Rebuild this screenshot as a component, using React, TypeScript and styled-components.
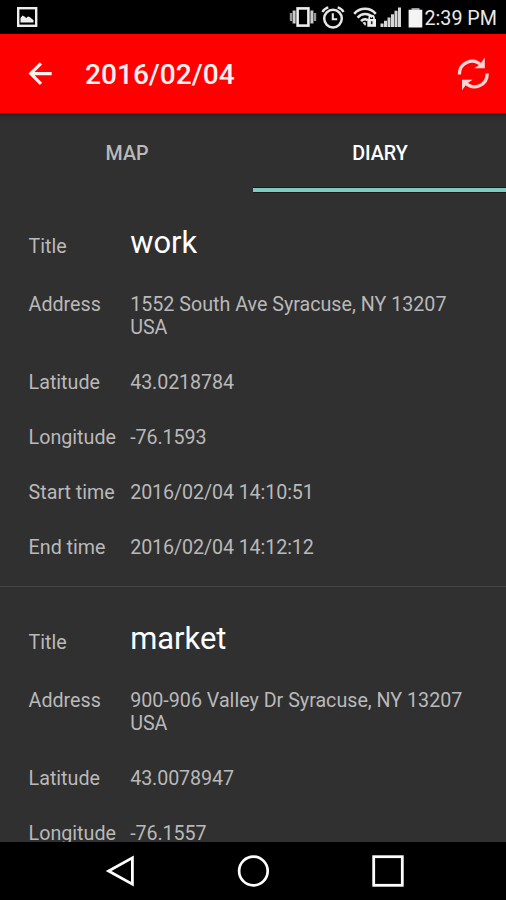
import React from "react";
import styled, { createGlobalStyle } from "styled-components";

const GlobalStyle = createGlobalStyle`
  body { margin: 0; background: #000; }
  * { box-sizing: border-box; }
`;

const Screen = styled.div`
  display: flex;
  flex-direction: column;
  width: 506px;
  height: 900px;
  overflow: hidden;
  background: #303030;
  color: #b9b9b9;
  font-family: Roboto, "Liberation Sans", sans-serif;
  font-size: 19.68px;
`;

const StatusBar = styled.header`
  display: flex;
  flex: none;
  align-items: center;
  height: 34px;
  padding: 0 8.5px 0 16px;
  background: #000;
`;

const StatusIcons = styled.div`
  display: flex;
  align-items: center;
  margin-left: auto;
`;

const Clock = styled.time`
  width: 73px;
  margin-left: 2px;
  padding-top: 4px;
  color: #e9e9e9;
  line-height: 32px;
  white-space: nowrap;
`;

const Icon = styled.svg<{ $gap?: number }>`
  display: block;
  flex: none;
  margin-left: ${(p) => p.$gap ?? 0}px;
`;

const AppBar = styled.div`
  display: flex;
  flex: none;
  align-items: center;
  height: 79px;
  padding: 0 16px 0 28px;
  background: #fe0000;
`;

const IconButton = styled.button`
  display: flex;
  padding: 0;
  border: 0;
  background: none;
  color: inherit;
`;

const AppTitle = styled.h1`
  flex: 1;
  margin: 3px 0 0 33px;
  color: #fff0f0;
  font-size: 28.1px;
  font-weight: 500;
  line-height: 36px;
`;

const Tabs = styled.nav`
  display: flex;
  flex: none;
  height: 79px;
  background: linear-gradient(#242424, #2d2d2d 5px, #303030 10px);
`;

const Tab = styled.button<{ $active?: boolean }>`
  flex: 1;
  padding: 6px 0 0 1px;
  border: 0;
  border-bottom: 4px solid ${(p) => (p.$active ? "#80cbc0" : "transparent")};
  background: none;
  box-shadow: ${(p) => (p.$active ? "inset 0 -1px #201818, 0 1px #201818" : "none")};
  color: ${(p) => (p.$active ? "#fff" : "#b9b9b9")};
  font: 500 19.68px/69px Roboto, sans-serif;
`;

const Diary = styled.main`
  flex: 1;
  min-height: 0;
  overflow: hidden;
`;

const Entry = styled.dl`
  display: flex;
  flex-direction: column;
  gap: 32px;
  height: 394px;
  margin: 0;
  padding: 33px 29px 0 28.6px;

  & + & {
    border-top: 1px solid #464646;
    padding-top: 34px;
  }
`;

const Field = styled.div`
  display: grid;
  grid-template-columns: 101.6px 1fr;
  align-items: baseline;
  line-height: 23px;

  &:first-child {
    margin-bottom: -0.5px;
  }
`;

const Label = styled.dt`
  white-space: nowrap;
`;

const Value = styled.dd<{ $kind: "heading" | "text" | "number" }>`
  margin: 0;
  ${(p) => p.$kind === "heading" && "color: #fff; font-size: 30.9px; line-height: 36px;"}
  ${(p) => p.$kind === "number" && "letter-spacing: -0.1px;"}
`;

const NavBar = styled.footer`
  display: flex;
  flex: none;
  align-items: center;
  justify-content: space-between;
  height: 58px;
  padding: 0 101.5px 0 105px;
  background: #000;
  color: #fff;
`;

type Row = { label: string; value: string; kind: "heading" | "text" | "number" };

const entries: Row[][] = [
  [
    { label: "Title", value: "work", kind: "heading" },
    { label: "Address", value: "1552 South Ave Syracuse, NY 13207 USA", kind: "text" },
    { label: "Latitude", value: "43.0218784", kind: "number" },
    { label: "Longitude", value: "-76.1593", kind: "number" },
    { label: "Start time", value: "2016/02/04 14:10:51", kind: "number" },
    { label: "End time", value: "2016/02/04 14:12:12", kind: "number" },
  ],
  [
    { label: "Title", value: "market", kind: "heading" },
    { label: "Address", value: "900-906 Valley Dr Syracuse, NY 13207 USA", kind: "text" },
    { label: "Latitude", value: "43.0078947", kind: "number" },
    { label: "Longitude", value: "-76.1557", kind: "number" },
  ],
];

const PictureIcon = () => (
  <Icon width="22" height="22" viewBox="0 0 22 22">
    <rect x="2.2" y="2.2" width="18" height="17.6" fill="none" stroke="#eee" strokeWidth="2.4" />
    <path d="M4.5 16.5V12l2-2.5 2 1 1.7 1.5 1.8-1.5 1.7.5 3.8 3.2v2.3z" fill="#eee" />
  </Icon>
);

const VibrateIcon = () => (
  <Icon width="28" height="24" viewBox="0 0 28 24">
    <rect x="8.6" y="3.4" width="10.8" height="17.2" fill="none" stroke="#eee" strokeWidth="2.6" />
    <path d="M5.1 5.5v13M22.9 5.5v13" stroke="#ccc" strokeWidth="3" />
    <path d="M2 8v8M26 8v8" stroke="#999" strokeWidth="2.4" />
  </Icon>
);

const AlarmIcon = () => (
  <Icon $gap={4} width="24" height="24" viewBox="0 0 24 24" fill="none" stroke="#e6e6e6">
    <circle cx="12" cy="13.6" r="8.8" strokeWidth="2.5" />
    <path d="M11.8 8.2v6h4.4" strokeWidth="2.1" />
    <path d="M1.4 7C2.8 4.6 4.8 3.1 7.3 2.4M22.6 7C21.2 4.6 19.2 3.1 16.7 2.4" strokeWidth="2.4" />
  </Icon>
);

const WifiIcon = () => (
  <Icon $gap={7} width="26" height="24" viewBox="0 0 26 24">
    <g fill="none" stroke="#e6e6e6" strokeWidth="2.5">
      <path d="M2.2 8.8C8 2.2 18 2.2 23.8 8.8" />
      <path d="M5.6 12.7c4.3-4.8 10.6-4.8 14.9-.6" />
      <path d="M9 16.2c2.1-2.2 4.6-2.5 6.7-1.1" />
    </g>
    <path d="m10.5 17.7 2.2-1 1.2 1v2.9h-1z" fill="#ddd" />
    <path d="M17.2 15v-2.1a2.4 2.4 0 0 1 4.8 0V15" fill="none" stroke="#eee" strokeWidth="1.7" />
    <path d="M15.3 14h8.7v7.8h-8.7z" fill="#eee" />
    <path d="M19.7 16.2v3" stroke="#222" strokeWidth="1.6" />
  </Icon>
);

const SignalIcon = () => (
  <Icon $gap={2} width="22" height="24" viewBox="0 0 22 24">
    <path d="M.5 18.5h3V22h-3zM4 15.7h3V22H4zM7.5 12.6h3V22h-3zM11 9.2h3V22h-3zM14.5 5.8h3V22h-3zM18 2.5h3V22h-3z" fill="#d6d6d6" />
  </Icon>
);

const BatteryIcon = () => (
  <Icon $gap={6} width="15" height="24" viewBox="0 0 15 24">
    <path d="M3.5 3h8v2h-8z" fill="#999" />
    <path d="M.6 4.7h13.7v17.8H.6z" fill="#f4f4f4" />
  </Icon>
);

export default function App() {
  return (
    <>
      <GlobalStyle />
      <Screen>
        <StatusBar>
          <PictureIcon />
          <StatusIcons>
            <VibrateIcon />
            <AlarmIcon />
            <WifiIcon />
            <SignalIcon />
            <BatteryIcon />
          </StatusIcons>
          <Clock>2:39 PM</Clock>
        </StatusBar>
        <AppBar>
          <IconButton aria-label="Back">
            <Icon width="24" height="24" viewBox="0 0 24 24" fill="none" stroke="#fff0f0" strokeWidth="3.2">
              <path d="M13 1.3 2.7 11.6 13 21.9M2.7 11.6h21" />
            </Icon>
          </IconButton>
          <AppTitle>2016/02/04</AppTitle>
          <IconButton aria-label="Refresh">
            <Icon width="34" height="34" viewBox="0 0 34 34">
              <g fill="none" stroke="#ffd5d5" strokeWidth="3.3">
                <path d="M3.4 17.5C3.2 5.2 17.2.1 25.4 8.4" />
                <path d="M31.2 16.5C31.4 28.8 17.4 33.9 9.2 25.6" />
              </g>
              <path d="M28.8.6v10.6H18.2l5.6-3.7zM6 33.2V22.8h10.6L11 26.5z" fill="#ffd5d5" />
            </Icon>
          </IconButton>
        </AppBar>
        <Tabs>
          <Tab>MAP</Tab>
          <Tab $active>DIARY</Tab>
        </Tabs>
        <Diary>
          {entries.map((rows, index) => (
            <Entry key={index}>
              {rows.map(({ label, value, kind }) => (
                <Field key={label}>
                  <Label>{label}</Label>
                  <Value $kind={kind}>{value}</Value>
                </Field>
              ))}
            </Entry>
          ))}
        </Diary>
        <NavBar>
          <IconButton aria-label="Back">
            <Icon width="30" height="34" viewBox="0 0 30 34" fill="none" stroke="currentColor" strokeWidth="2.8">
              <path d="M27.4 3.8v26.4L3.6 17z" />
            </Icon>
          </IconButton>
          <IconButton aria-label="Home">
            <Icon width="34" height="34" viewBox="0 0 34 34" fill="none" stroke="currentColor" strokeWidth="2.7">
              <circle cx="17.4" cy="17" r="14.3" />
            </Icon>
          </IconButton>
          <IconButton aria-label="Recent apps">
            <Icon width="34" height="34" viewBox="0 0 34 34" fill="none" stroke="currentColor" strokeWidth="2.8">
              <rect x="2.7" y="2.7" width="28.6" height="28.6" />
            </Icon>
          </IconButton>
        </NavBar>
      </Screen>
    </>
  );
}
